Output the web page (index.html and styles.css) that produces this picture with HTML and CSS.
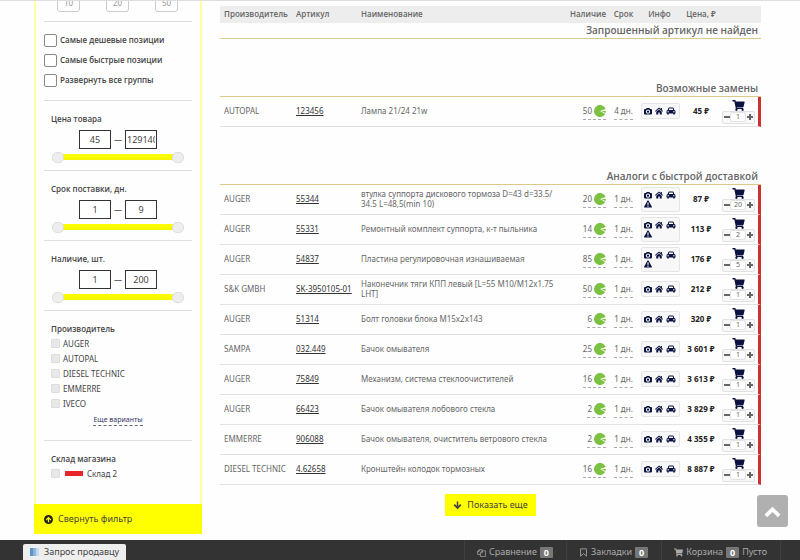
FILE: index.html
```html
<!DOCTYPE html>
<html lang="ru">
<head>
<meta charset="utf-8">
<meta name="viewport" content="width=device-width, initial-scale=1">
<title>Поиск запчастей</title>
<link rel="stylesheet" href="styles.css">
</head>
<body>
<svg class="sprite" aria-hidden="true">
  <symbol id="cart" viewBox="0 0 576 512"><path d="M528.12 301.319l47.273-208C578.806 78.301 567.391 64 551.99 64H159.208l-9.166-44.81C147.758 8.021 137.93 0 126.529 0H24C10.745 0 0 10.745 0 24v16c0 13.255 10.745 24 24 24h69.883l70.248 343.435C147.325 417.1 136 435.222 136 456c0 30.928 25.072 56 56 56s56-25.072 56-56c0-15.674-6.447-29.835-16.824-40h209.647C430.447 426.165 424 440.326 424 456c0 30.928 25.072 56 56 56s56-25.072 56-56c0-22.172-12.888-41.332-31.579-50.405l5.517-24.276c3.413-15.018-8.002-29.319-23.403-29.319H218.117l-6.545-32h293.145c11.206 0 20.92-7.754 23.403-18.681z"/></symbol>
  <symbol id="camera" viewBox="0 0 16 16"><path fill-rule="evenodd" d="M5 2h6l1 2h2q2 0 2 2v7q0 2-2 2H2q-2 0-2-2V6q0-2 2-2h2zM8 5a4.3 4.3 0 1 0 0 8.600a4.300 4.300 0 1 0 0-8.600zM8 7a2.300 2.300 0 1 1 0 4.600a2.300 2.300 0 1 1 0-4.600z"/></symbol>
  <symbol id="home" viewBox="0 0 16 16"><path d="M8 1l3.500 3V2h2.300v4L16 8l-1 1.300L8 3.400 1 9.300 0 8zM8 4.800l5.500 4.700V15H9.500v-4h-3v4H2.500V9.500z"/></symbol>
  <symbol id="car" viewBox="0 0 18 16"><path fill-rule="evenodd" d="M5.500 1h7q1.500 0 2 1.500L15.500 6Q18 6.500 18 9v4h-1.500v1q0 1.500-1.500 1.500T13.500 14v-1h-9v1q0 1.500-1.500 1.500T1.500 14v-1H0V9q0-2.500 2.500-3l1-3.500Q4 1 5.500 1zM5.500 3l-.8 3h8.600l-.8-3zM3.300 8a1.400 1.400 0 1 0 0 2.800a1.400 1.400 0 1 0 0-2.800zM14.700 8a1.400 1.400 0 1 0 0 2.800a1.400 1.400 0 1 0 0-2.800z"/></symbol>
  <symbol id="warn" viewBox="0 0 16 16"><path fill-rule="evenodd" d="M8 0.500q.8 0 1.200.8l6.600 12q.5 1.700-1.200 1.900H1.400Q-.3 15 .2 13.300l6.600-12Q7.200.500 8 .500zM6.700 5l.4 5h1.800l.4-5zM6.900 11.200v2.100h2.200v-2.100z"/></symbol>
  <symbol id="pie" viewBox="0 0 24 24"><path d="M12 12L23.300 8A12 12 0 1 0 22.400 18z"/><path d="M14.500 11.800h9.200q.1 2.200-.8 4z"/></symbol>
  <symbol id="up" viewBox="0 0 16 16"><path fill-rule="evenodd" d="M8 0a8 8 0 1 0 0 16A8 8 0 1 0 8 0zM8 3l5 5-1.500 1.600-2.400-2.300V13H6.900V7.300L4.500 9.600 3 8z"/></symbol>
  <symbol id="down" viewBox="0 0 16 16"><path d="M6.700 1h2.600v8l3.500-3.500L15 7.500l-7 7-7-7 2.200-2L6.700 9z"/></symbol>
  <symbol id="chevron" viewBox="0 0 16 16"><path d="M8 3.500l7.500 7.300-2.500 2.500-5-4.800-5 4.800L.500 10.800z"/></symbol>
  <symbol id="copy" viewBox="0 0 16 16"><path fill="none" stroke="currentColor" stroke-width="1.300" d="M6 11.500H1V6l3-3h5v2M4 3v3H1M6 8l3-3h6v10H6zM9.500 5v3.500H6"/></symbol>
  <symbol id="bookmark" viewBox="0 0 16 16"><path fill="none" stroke="currentColor" stroke-width="1.500" d="M2.800 1.500h10.400v13L8 10l-5.200 4.500z"/></symbol>
</svg>

<div class="page">
  <form class="filter">
    <div class="filter-body">
      <div class="sizes">
        <button type="button">10</button>
        <button type="button">20</button>
        <button type="button">50</button>
      </div>
      <div class="options">
        <label><input type="checkbox">Самые дешевые позиции</label>
        <label><input type="checkbox">Самые быстрые позиции</label>
        <label><input type="checkbox">Развернуть все группы</label>
      </div>
      <fieldset class="group">
        <legend>Цена товара</legend>
        <div class="bounds"><input type="text" value="45" aria-label="Цена от"><span>—</span><input type="text" value="129140" aria-label="Цена до"></div>
        <div class="slider"><input type="range" min="45" max="129140" value="45" aria-label="Минимальная цена"><input type="range" min="45" max="129140" value="129140" aria-label="Максимальная цена"></div>
      </fieldset>
      <fieldset class="group">
        <legend>Срок поставки, дн.</legend>
        <div class="bounds"><input type="text" value="1" aria-label="Срок от"><span>—</span><input type="text" value="9" aria-label="Срок до"></div>
        <div class="slider"><input type="range" min="1" max="9" value="1" aria-label="Минимальный срок"><input type="range" min="1" max="9" value="9" aria-label="Максимальный срок"></div>
      </fieldset>
      <fieldset class="group">
        <legend>Наличие, шт.</legend>
        <div class="bounds"><input type="text" value="1" aria-label="Наличие от"><span>—</span><input type="text" value="200" aria-label="Наличие до"></div>
        <div class="slider"><input type="range" min="1" max="200" value="1" aria-label="Минимальное наличие"><input type="range" min="1" max="200" value="200" aria-label="Максимальное наличие"></div>
      </fieldset>
      <fieldset class="group makers">
        <legend>Производитель</legend>
        <label><input type="checkbox">AUGER</label>
        <label><input type="checkbox">AUTOPAL</label>
        <label><input type="checkbox">DIESEL TECHNIC</label>
        <label><input type="checkbox">EMMERRE</label>
        <label><input type="checkbox">IVECO</label>
        <a class="more" href="#">Еще варианты</a>
      </fieldset>
      <fieldset class="group store">
        <legend>Склад магазина</legend>
        <label><input type="checkbox"><span class="swatch"></span>Склад 2</label>
      </fieldset>
    </div>
    <button type="button" class="collapse"><svg class="ico"><use href="#up"/></svg>Свернуть фильтр</button>
  </form>

  <main class="results">
    <table>
      <colgroup><col class="c-maker"><col class="c-code"><col><col class="c-stock"><col class="c-term"><col class="c-info"><col class="c-price"><col class="c-buy"></colgroup>
      <thead>
        <tr><th>Производитель</th><th>Артикул</th><th>Наименование</th><th class="stock">Наличие</th><th class="mid">Срок</th><th class="mid">Инфо</th><th class="mid">Цена, ₽</th><th></th></tr>
      </thead>
      <tbody>
        <tr class="title first"><th colspan="8">Запрошенный артикул не найден</th></tr>
      </tbody>
      <tbody>
        <tr class="title"><th colspan="8">Возможные замены</th></tr>
        <tr><td>AUTOPAL</td><td><a href="#">123456</a></td><td>Лампа 21/24 21w</td><td class="stock"><span class="dash">50<svg class="pie"><use href="#pie"/></svg></span></td><td class="mid"><span class="dash">4 дн.</span></td><td><div class="info"><svg><use href="#camera"/></svg><svg><use href="#home"/></svg><svg class="wide"><use href="#car"/></svg></div></td><td class="price">45 ₽</td><td class="buy"><button class="cart" aria-label="В корзину"><svg><use href="#cart"/></svg></button><div class="qty"><button class="minus" aria-label="Меньше"></button><input type="text" value="1" aria-label="Количество"><button class="plus" aria-label="Больше"></button></div></td></tr>
      </tbody>
      <tbody>
        <tr class="title"><th colspan="8">Аналоги с быстрой доставкой</th></tr>
        <tr><td>AUGER</td><td><a href="#">55344</a></td><td>втулка суппорта дискового тормоза D=43 d=33.5/<wbr>34.5 L=48,5(min 10)</td><td class="stock"><span class="dash">20<svg class="pie"><use href="#pie"/></svg></span></td><td class="mid"><span class="dash">1 дн.</span></td><td><div class="info"><svg><use href="#camera"/></svg><svg><use href="#home"/></svg><svg class="wide"><use href="#car"/></svg><svg><use href="#warn"/></svg></div></td><td class="price">87 ₽</td><td class="buy"><button class="cart" aria-label="В корзину"><svg><use href="#cart"/></svg></button><div class="qty"><button class="minus" aria-label="Меньше"></button><input type="text" value="20" aria-label="Количество"><button class="plus" aria-label="Больше"></button></div></td></tr>
        <tr><td>AUGER</td><td><a href="#">55331</a></td><td>Ремонтный комплект суппорта, к-т пыльника</td><td class="stock"><span class="dash">14<svg class="pie"><use href="#pie"/></svg></span></td><td class="mid"><span class="dash">1 дн.</span></td><td><div class="info"><svg><use href="#camera"/></svg><svg><use href="#home"/></svg><svg class="wide"><use href="#car"/></svg><svg><use href="#warn"/></svg></div></td><td class="price">113 ₽</td><td class="buy"><button class="cart" aria-label="В корзину"><svg><use href="#cart"/></svg></button><div class="qty"><button class="minus" aria-label="Меньше"></button><input type="text" value="2" aria-label="Количество"><button class="plus" aria-label="Больше"></button></div></td></tr>
        <tr><td>AUGER</td><td><a href="#">54837</a></td><td>Пластина регулировочная изнашиваемая</td><td class="stock"><span class="dash">85<svg class="pie"><use href="#pie"/></svg></span></td><td class="mid"><span class="dash">1 дн.</span></td><td><div class="info"><svg><use href="#camera"/></svg><svg><use href="#home"/></svg><svg class="wide"><use href="#car"/></svg><svg><use href="#warn"/></svg></div></td><td class="price">176 ₽</td><td class="buy"><button class="cart" aria-label="В корзину"><svg><use href="#cart"/></svg></button><div class="qty"><button class="minus" aria-label="Меньше"></button><input type="text" value="5" aria-label="Количество"><button class="plus" aria-label="Больше"></button></div></td></tr>
        <tr><td>S&amp;K GMBH</td><td><a href="#">SK-3950105-01</a></td><td>Наконечник тяги КПП левый [L=55 M10/M12x1.75 LHT]</td><td class="stock"><span class="dash">50<svg class="pie"><use href="#pie"/></svg></span></td><td class="mid"><span class="dash">1 дн.</span></td><td><div class="info"><svg><use href="#camera"/></svg><svg><use href="#home"/></svg><svg class="wide"><use href="#car"/></svg></div></td><td class="price">212 ₽</td><td class="buy"><button class="cart" aria-label="В корзину"><svg><use href="#cart"/></svg></button><div class="qty"><button class="minus" aria-label="Меньше"></button><input type="text" value="1" aria-label="Количество"><button class="plus" aria-label="Больше"></button></div></td></tr>
        <tr><td>AUGER</td><td><a href="#">51314</a></td><td>Болт головки блока M15x2x143</td><td class="stock"><span class="dash">6<svg class="pie"><use href="#pie"/></svg></span></td><td class="mid"><span class="dash">1 дн.</span></td><td><div class="info"><svg><use href="#camera"/></svg><svg><use href="#home"/></svg><svg class="wide"><use href="#car"/></svg></div></td><td class="price">320 ₽</td><td class="buy"><button class="cart" aria-label="В корзину"><svg><use href="#cart"/></svg></button><div class="qty"><button class="minus" aria-label="Меньше"></button><input type="text" value="1" aria-label="Количество"><button class="plus" aria-label="Больше"></button></div></td></tr>
        <tr><td>SAMPA</td><td><a href="#">032.449</a></td><td>Бачок омывателя</td><td class="stock"><span class="dash">25<svg class="pie"><use href="#pie"/></svg></span></td><td class="mid"><span class="dash">1 дн.</span></td><td><div class="info"><svg><use href="#camera"/></svg><svg><use href="#home"/></svg><svg class="wide"><use href="#car"/></svg></div></td><td class="price">3 601 ₽</td><td class="buy"><button class="cart" aria-label="В корзину"><svg><use href="#cart"/></svg></button><div class="qty"><button class="minus" aria-label="Меньше"></button><input type="text" value="1" aria-label="Количество"><button class="plus" aria-label="Больше"></button></div></td></tr>
        <tr><td>AUGER</td><td><a href="#">75849</a></td><td>Механизм, система стеклоочистителей</td><td class="stock"><span class="dash">16<svg class="pie"><use href="#pie"/></svg></span></td><td class="mid"><span class="dash">1 дн.</span></td><td><div class="info"><svg><use href="#camera"/></svg><svg><use href="#home"/></svg><svg class="wide"><use href="#car"/></svg></div></td><td class="price">3 613 ₽</td><td class="buy"><button class="cart" aria-label="В корзину"><svg><use href="#cart"/></svg></button><div class="qty"><button class="minus" aria-label="Меньше"></button><input type="text" value="1" aria-label="Количество"><button class="plus" aria-label="Больше"></button></div></td></tr>
        <tr><td>AUGER</td><td><a href="#">66423</a></td><td>Бачок омывателя лобового стекла</td><td class="stock"><span class="dash">2<svg class="pie"><use href="#pie"/></svg></span></td><td class="mid"><span class="dash">1 дн.</span></td><td><div class="info"><svg><use href="#camera"/></svg><svg><use href="#home"/></svg><svg class="wide"><use href="#car"/></svg></div></td><td class="price">3 829 ₽</td><td class="buy"><button class="cart" aria-label="В корзину"><svg><use href="#cart"/></svg></button><div class="qty"><button class="minus" aria-label="Меньше"></button><input type="text" value="1" aria-label="Количество"><button class="plus" aria-label="Больше"></button></div></td></tr>
        <tr><td>EMMERRE</td><td><a href="#">906088</a></td><td>Бачок омывателя, очиститель ветрового стекла</td><td class="stock"><span class="dash">2<svg class="pie"><use href="#pie"/></svg></span></td><td class="mid"><span class="dash">1 дн.</span></td><td><div class="info"><svg><use href="#camera"/></svg><svg><use href="#home"/></svg><svg class="wide"><use href="#car"/></svg></div></td><td class="price">4 355 ₽</td><td class="buy"><button class="cart" aria-label="В корзину"><svg><use href="#cart"/></svg></button><div class="qty"><button class="minus" aria-label="Меньше"></button><input type="text" value="1" aria-label="Количество"><button class="plus" aria-label="Больше"></button></div></td></tr>
        <tr><td>DIESEL TECHNIC</td><td><a href="#">4.62658</a></td><td>Кронштейн колодок тормозных</td><td class="stock"><span class="dash">16<svg class="pie"><use href="#pie"/></svg></span></td><td class="mid"><span class="dash">1 дн.</span></td><td><div class="info"><svg><use href="#camera"/></svg><svg><use href="#home"/></svg><svg class="wide"><use href="#car"/></svg></div></td><td class="price">8 887 ₽</td><td class="buy"><button class="cart" aria-label="В корзину"><svg><use href="#cart"/></svg></button><div class="qty"><button class="minus" aria-label="Меньше"></button><input type="text" value="1" aria-label="Количество"><button class="plus" aria-label="Больше"></button></div></td></tr>
      </tbody>
    </table>
    <button type="button" class="show-more"><svg class="ico"><use href="#down"/></svg>Показать еще</button>
  </main>
</div>

<button type="button" class="to-top" aria-label="Наверх"><svg><use href="#chevron"/></svg></button>

<footer class="bar">
  <button type="button" class="ask"><span class="stripes"></span>Запрос продавцу</button>
  <nav>
    <a href="#"><svg class="ico"><use href="#copy"/></svg>Сравнение <b>0</b></a>
    <a href="#"><svg class="ico"><use href="#bookmark"/></svg>Закладки <b>0</b></a>
    <a href="#"><svg class="ico"><use href="#cart"/></svg>Корзина <b>0</b> Пусто</a>
  </nav>
</footer>
</body>
</html>
```
FILE: styles.css
```css
* { box-sizing: border-box; }

body {
  margin: 0;
  border-top: 1px solid #ddd;
  background: #fefefe;
  color: #666;
  font: 8px/10px "Noto Sans", "Open Sans", sans-serif;
  overflow: hidden;
}

button, input { font: inherit; color: inherit; margin: 0; padding: 0; }
button { border: 0; background: none; cursor: pointer; }
svg { fill: currentColor; }
.sprite { position: absolute; width: 0; height: 0; }
.ico { width: 9px; height: 9px; }

.page {
  display: grid;
  grid-template-columns: 168px 1fr;
  gap: 18px;
  align-items: start;
  padding: 0 39px 27px 34px;
}

/* Filter */
.filter {
  display: flex;
  flex-direction: column;
  color: #444;
}
.filter-body {
  display: flex;
  flex-direction: column;
  padding: 0 8px;
  border: 2px solid #ffffa0;
  border-width: 0 2px;
}
.sizes {
  display: flex;
  justify-content: space-between;
  margin-top: -7px;
  padding: 0 14px 9px 13px;
  border-bottom: 1px solid #ddd;
}
.sizes button {
  width: 23px;
  height: 18px;
  border: 1px solid #ccc;
  border-radius: 3px;
  color: #999;
}
.options {
  display: flex;
  flex-direction: column;
  gap: 6px;
  padding: 11px 0 13px;
  border-bottom: 1px solid #ddd;
  font-family: "Open Sans", "Noto Sans", sans-serif;
  line-height: 14px;
  font-weight: 600;
}
label { display: flex; align-items: center; }
.options label { gap: 3px; }
input[type="checkbox"] { appearance: none; flex: none; }
.options input {
  width: 13px;
  height: 13px;
  border: 1px solid #888;
  border-radius: 2px;
  background: #fff;
}
input[type="checkbox"]:checked { background: #ff0; }

.group {
  margin: 0;
  padding: 11px 7px 7px;
  border: 0;
  border-bottom: 1px solid #ddd;
  min-width: 0;
}
.group legend {
  float: left;
  width: 100%;
  padding: 0;
  font-family: "Open Sans", "Noto Sans", sans-serif;
  line-height: 14px;
  font-weight: 600;
}
.bounds {
  display: flex;
  justify-content: center;
  align-items: center;
  gap: 3px;
  clear: both;
  padding-top: 4px;
}
.bounds input {
  width: 32px;
  height: 19px;
  padding: 0 1px;
  border: 1px solid #333;
  background: #fff;
  font-size: 9px;
  text-align: center;
}
.bounds span { width: 8px; }
.slider {
  display: grid;
  height: 12px;
  margin: 2px 1px 0;
  background: linear-gradient(#ff0, #f4f400) center / 116px 6px no-repeat;
}
.slider input {
  grid-area: 1 / 1;
  appearance: none;
  width: 100%;
  height: 12px;
  background: none;
  pointer-events: none;
}
.slider input::-webkit-slider-thumb {
  appearance: none;
  width: 12px;
  height: 11px;
  border: 1px solid #ddd;
  border-radius: 5px;
  background: #eee;
  pointer-events: auto;
}
.makers { padding-bottom: 14px; }
.makers label, .store label {
  clear: both;
  gap: 3px;
  height: 15px;
}
.makers input, .store input {
  width: 9px;
  height: 9px;
  border: 1px solid #ddd;
  border-radius: 1px;
  background: #e8e8e8;
}
.more {
  display: table;
  margin: 4px auto 0;
  border-bottom: 1px dashed #667;
  color: #336;
  font-size: 7px;
  text-decoration: none;
}
.store { padding-bottom: 23px; border: 0; }
.swatch { width: 18px; height: 5px; margin: 0 1px 0 2px; background: #e8262a; }
.collapse {
  display: flex;
  align-items: center;
  gap: 5px;
  height: 30px;
  padding-left: 10px;
  background: #ff0;
  font-size: 9px;
}
.collapse svg { color: #222; }

/* Results */
.results { padding-top: 5px; }
table {
  width: 100%;
  table-layout: fixed;
  border-collapse: separate;
  border-spacing: 0;
}
.c-maker { width: 72px; }
.c-code { width: 65px; }
.c-stock { width: 43px; }
.c-term { width: 27px; }
.c-info { width: 45px; }
.c-price { width: 38px; }
.c-buy { width: 41px; }
thead th {
  height: 17px;
  padding: 0 4px 2px;
  background: #ededed;
  font-family: "Open Sans", "Noto Sans", sans-serif;
  font-weight: 600;
  text-align: left;
  white-space: nowrap;
}
td {
  height: 30px;
  padding: 0 4px 1px;
  border-bottom: 1px solid #e2e2e2;
}
th.mid, td.mid, td.price { padding-left: 0; padding-right: 0; text-align: center; }
th.stock, td.stock { padding-left: 0; text-align: right; }
td a { color: #333; }
.title th {
  height: 58px;
  padding: 0 3px 1px;
  border-bottom: 1px solid #dcc888;
  font-family: "Open Sans", "Noto Sans", sans-serif;
  font-size: 10px;
  line-height: 14px;
  font-weight: 600;
  text-align: right;
  vertical-align: bottom;
}
.title.first th { height: 16px; }
.dash {
  display: inline-flex;
  align-items: center;
  gap: 2px;
  height: 17px;
  margin-top: 1px;
  border-bottom: 1px dashed #aaa;
  vertical-align: middle;
}
.pie { width: 12px; height: 12px; color: #7cc142; }
.info {
  display: flex;
  flex-wrap: wrap;
  gap: 1px 3px;
  padding: 3px 2px;
  margin-right: -2px;
  border: 1px solid #e5e5e5;
  border-radius: 2px;
  background: #f8f8f8;
  color: #0d1340;
}
.info svg { width: 8px; height: 8px; }
.info .wide { width: 10px; }
td.price { color: #222; font-weight: 700; white-space: nowrap; }
td.buy {
  padding: 0 3px 0 1px;
  border-right: 3px solid #d03030;
}
.cart { display: block; margin: 0 auto; color: #0d1340; }
.cart svg { display: block; width: 13px; height: 11px; }
.qty {
  display: flex;
  align-items: center;
  justify-content: space-between;
  width: 33px;
  height: 13px;
  margin: 0 auto;
  padding: 0 1px;
  border: 1px solid #e2e2e2;
  border-radius: 2px;
  background: #f8f8f8;
}
.qty input {
  width: 16px;
  height: 10px;
  border: 1px solid #e2e2e2;
  border-radius: 2px;
  background: #fff;
  font-size: 7px;
  text-align: center;
}
.minus, .plus {
  width: 6px;
  height: 6px;
  background: linear-gradient(#666, #666) center / 6px 2px no-repeat;
}
.plus { background: linear-gradient(#666, #666) center / 6px 2px no-repeat, linear-gradient(#666, #666) center / 2px 6px no-repeat; }
.show-more {
  display: flex;
  align-items: center;
  gap: 5px;
  height: 22px;
  margin: 9px auto 0;
  padding: 0 8px;
  border-radius: 1px;
  background: #ff0;
  color: #444;
  font-size: 9px;
}

.to-top {
  position: fixed;
  right: 12px;
  bottom: 33px;
  width: 31px;
  height: 32px;
  border-radius: 3px;
  background: #b0b0b0;
  color: #fff;
}
.to-top svg { display: block; width: 17px; height: 17px; margin: 0 auto; }

.bar {
  position: fixed;
  inset: auto 0 0;
  display: flex;
  justify-content: space-between;
  height: 20px;
  padding: 0 19px 0 23px;
  background: #333;
  color: #aaa;
  font-size: 9px;
}
.ask {
  display: flex;
  align-items: center;
  gap: 5px;
  margin-top: 4px;
  padding: 0 7px;
  border-radius: 2px 2px 0 0;
  background: #eee;
  color: #444;
}
.stripes {
  width: 9px;
  height: 8px;
  background: linear-gradient(90deg, #5b94c4 3px, #8ab4d8 3px 6px, #c4daec 6px);
}
.bar nav { display: flex; }
.bar a {
  display: flex;
  align-items: center;
  gap: 3px;
  padding: 4px 13px 0 12px;
  border-left: 1px solid #3f3f3f;
  color: inherit;
  text-decoration: none;
}
.bar a:last-child { border-right: 1px solid #3f3f3f; }
.bar b {
  padding: 0 4px;
  border-radius: 1px;
  background: #777;
  color: #fff;
  line-height: 11px;
}
```
